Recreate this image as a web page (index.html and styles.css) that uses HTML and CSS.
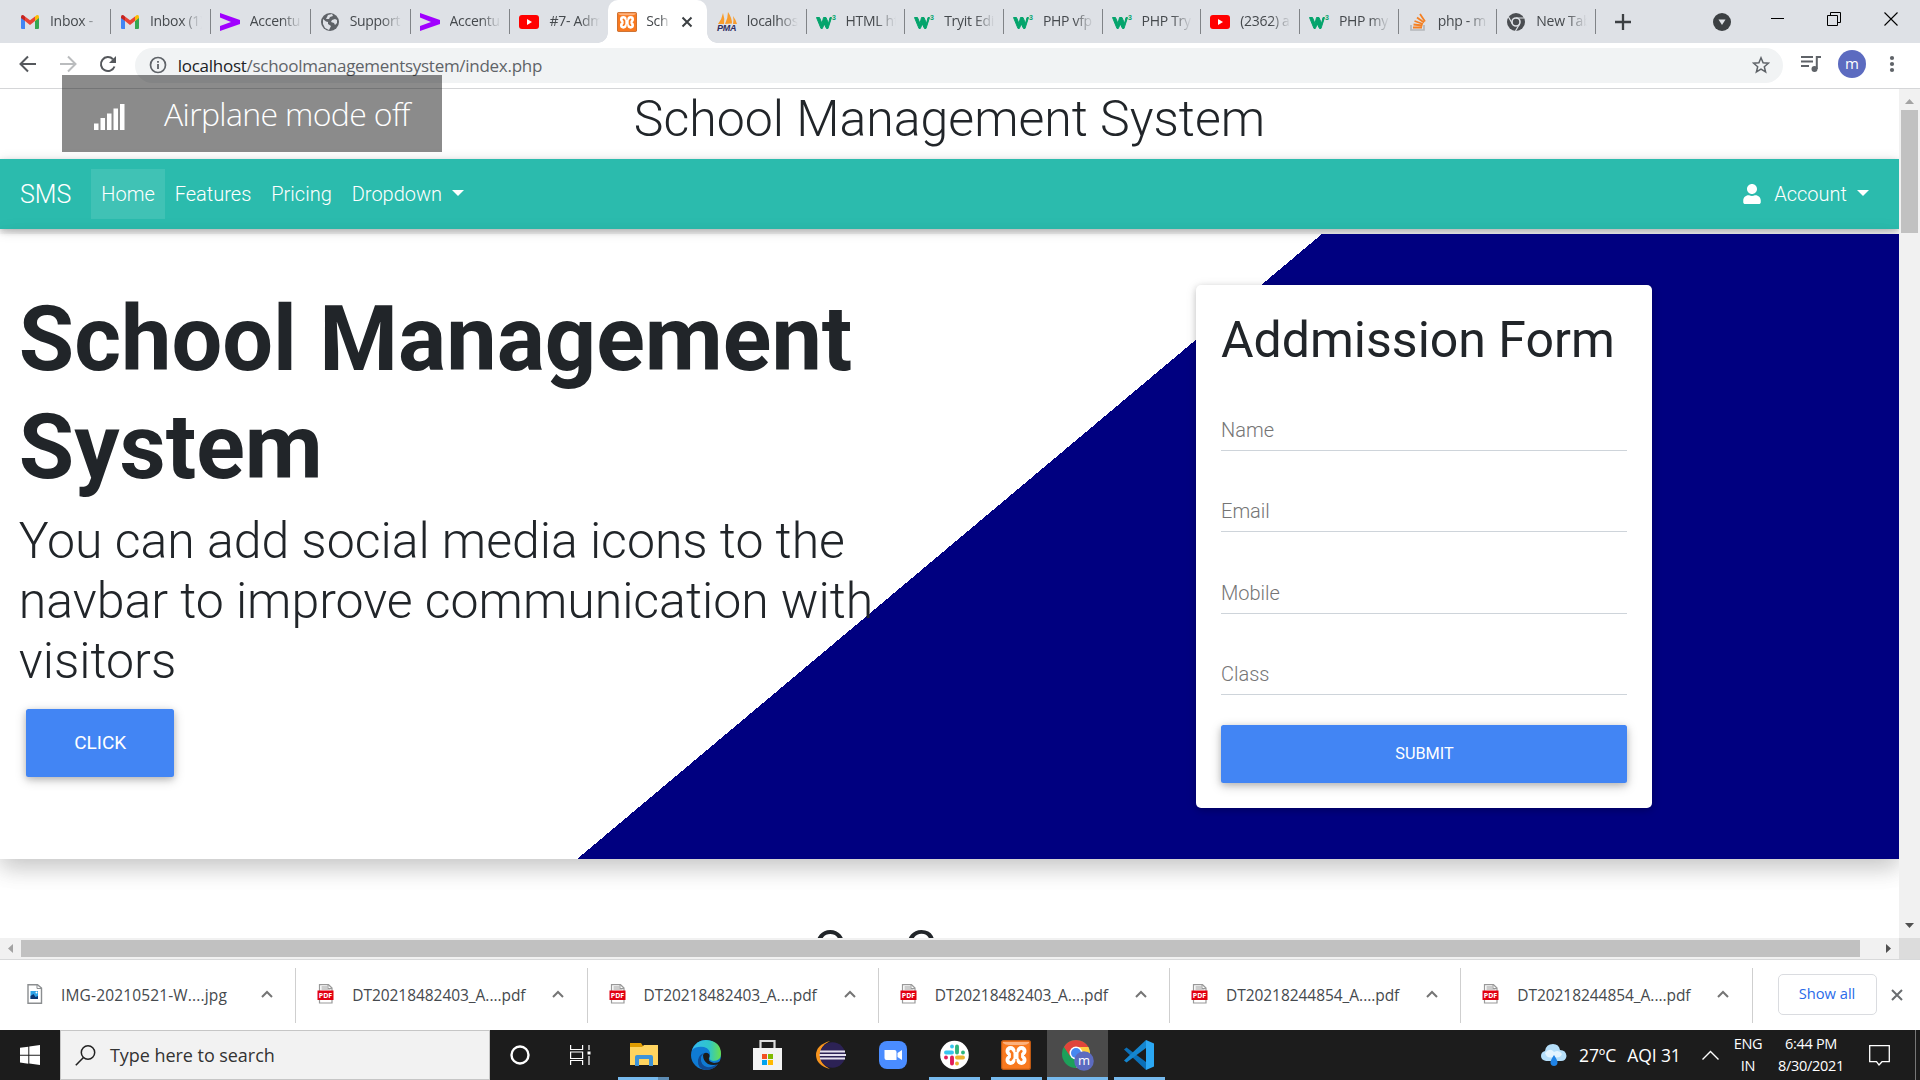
FILE: index.html
```html
<!DOCTYPE html>
<html lang="en">
<head>
<meta charset="utf-8">
<title>School Management System</title>
<link rel="stylesheet" href="styles.css">
</head>
<body>
<svg class="defs" aria-hidden="true">
  <symbol id="gmail" viewBox="0 0 20 20"><path d="M1 5v11q0 1 1 1h3V9z" fill="#4285f4"/><path d="M19 5v11q0 1-1 1h-3V9z" fill="#34a853"/><path d="M15 9V4.500l1.500-1.200Q19 2.500 19 5v1z" fill="#fbbc04"/><path d="M5 9V4.500L3.500 3.300Q1 2.500 1 5v1z" fill="#c5221f"/><path d="M5 4.500l5 3.800 5-3.800V9l-5 4-5-4z" fill="#ea4335"/></symbol>
  <symbol id="accenture" viewBox="0 0 20 20"><path d="M0 1v4.500l11 4.500-11 4V19l20-7v-4z" fill="#a100ff"/></symbol>
  <symbol id="globe" viewBox="0 0 20 20"><circle cx="10" cy="10" r="9" fill="#5f6368"/><path d="M3 7l3 2.500 2 .5v2l3 2-2 4-4-2-2-4zM8 3l4-1 1 2-3 1-1 2H6zM12 8l3-1 2 1v3l-2 2-1-2-3-1z" fill="#dee1e6"/></symbol>
  <symbol id="youtube" viewBox="0 0 20 20"><rect y="3" width="20" height="14" rx="3" fill="#f00"/><path d="M8 7v6l5-3z" fill="#fff"/></symbol>
  <symbol id="xampp" viewBox="0 0 30 30"><rect x=".6" y=".6" width="28.800" height="28.800" rx="2" fill="#f9791f" stroke="#bd5914" stroke-width="1.200"/><path d="M2 2h26v1q-2 2-6 2H8q-4 0-6-2z" fill="#fdb17d"/><g fill="#fff"><circle cx="9.500" cy="11" r="5"/><circle cx="20.500" cy="11" r="5"/><circle cx="9.500" cy="20" r="5"/><circle cx="20.500" cy="20" r="5"/><path d="M7 12h16v7H7z"/></g><path d="M9.700 11.200l1.500 2v4.600l-1.500 2M20.300 11.200l-1.500 2v4.600l1.500 2" fill="none" stroke="#f9791f" stroke-width="2.600" stroke-linecap="round" stroke-linejoin="round"/></symbol>
  <symbol id="pma" viewBox="0 0 20 20" overflow="visible"><path d="M1 12Q5 7 6 1q2 6 1 11zM8 12q3-6 3-12 4 6 4 11.500zM16 12q1-4 0-8 3 4 4 8z" fill="#f89c2c"/><text x="0" y="19" class="pma-text">PMA</text></symbol>
  <symbol id="w3" viewBox="0 0 20 20" overflow="visible"><path d="M.5 5.500h3l2.500 6 1.500-6h2.500l2.500 6 1.500-6h1.500L12 16.500h-1.500L8.300 12l-2 4.500H5z" fill="#04a46c" stroke="#04a46c"/><text x="16" y="8" class="w3-text">3</text></symbol>
  <symbol id="stack" viewBox="0 0 20 20"><path d="M3 13v5h13v-5" fill="none" stroke="#b4b7bb" stroke-width="1.700"/><path d="M5 15.500h9M5.500 12.500l9 1M6.500 9l8.500 3M9 5.500l7 5M12 2l5 7.500" stroke="#f48024" stroke-width="1.800"/></symbol>
  <symbol id="chromegray" viewBox="0 0 20 20"><circle cx="10" cy="10" r="9" fill="#4a4d51"/><circle cx="10" cy="10" r="4" fill="#4a4d51" stroke="#dee1e6" stroke-width="1.600"/><path d="M10 6h8M6.500 12L2.500 5M13.500 12l-4 7" stroke="#dee1e6" stroke-width="1.200"/></symbol>
  <symbol id="pdf" viewBox="0 0 17 20"><path d="M2.500.7h9L15 4v15H2.500z" fill="#fff" stroke="#999" stroke-width="1.200"/><path d="M4.500 3h6M4.500 5h9M11 1v3.500h4" fill="none" stroke="#999"/><rect x=".5" y="6.500" width="16" height="9.500" fill="#e2000f"/><text x="8.500" y="14" text-anchor="middle" class="pdf-text">PDF</text></symbol>
  <symbol id="image" viewBox="0 0 17 20"><path d="M2 .7h9.500L15.500 4v15.200H2z" fill="#fff" stroke="#8b8e90" stroke-width="1.400"/><path d="M11 .7V4.500h4" fill="none" stroke="#8b8e90"/><path d="M4.500 7h7.500v8H4.500z" fill="#2da3e8"/><path d="M4.500 12l3-2 2 3 2.500-1v3H4.500z" fill="#0a3573"/><circle cx="10.500" cy="8.500" r="1" fill="#fff"/></symbol>
  <symbol id="up" viewBox="0 0 12 8"><path d="M1 7l5-5 5 5" fill="none" stroke="#757575" stroke-width="2"/></symbol>
</svg>

<header class="tabstrip">
  <div class="tabs">
    <div class="tab"><svg><use href="#gmail"/></svg><span>Inbox -</span></div>
    <div class="tab"><svg><use href="#gmail"/></svg><span>Inbox (1)</span></div>
    <div class="tab"><svg><use href="#accenture"/></svg><span>Accentu</span></div>
    <div class="tab"><svg><use href="#globe"/></svg><span>Support</span></div>
    <div class="tab"><svg><use href="#accenture"/></svg><span>Accentu</span></div>
    <div class="tab before"><svg><use href="#youtube"/></svg><span>#7- Adm</span></div>
    <div class="tab active"><svg><use href="#xampp"/></svg><span>Sch</span><svg class="tab-close" viewBox="0 0 12 12"><path d="M1.500 1.500l9 9M10.500 1.500l-9 9" stroke="#3c4043" stroke-width="2"/></svg></div>
    <div class="tab"><svg><use href="#pma"/></svg><span>localhos</span></div>
    <div class="tab"><svg><use href="#w3"/></svg><span>HTML ht</span></div>
    <div class="tab"><svg><use href="#w3"/></svg><span>Tryit Edi</span></div>
    <div class="tab"><svg><use href="#w3"/></svg><span>PHP vfp</span></div>
    <div class="tab"><svg><use href="#w3"/></svg><span>PHP Try</span></div>
    <div class="tab"><svg><use href="#youtube"/></svg><span>(2362) a</span></div>
    <div class="tab"><svg><use href="#w3"/></svg><span>PHP my</span></div>
    <div class="tab"><svg><use href="#stack"/></svg><span>php - m</span></div>
    <div class="tab"><svg><use href="#chromegray"/></svg><span>New Tab</span></div>
  </div>
  <svg class="newtab" viewBox="0 0 16 16"><path d="M8 0v16M0 8h16" stroke="#3c4043" stroke-width="2.300"/></svg>
  <div class="winctl">
    <svg width="18" height="18" viewBox="0 0 18 18"><circle cx="9" cy="9" r="9" fill="#3c4043"/><path d="M5.500 6.500h7L9 12z" fill="#dee1e6"/></svg>
    <svg class="min" width="13" height="13" viewBox="0 0 13 13"><path d="M0 6.500h13" stroke="#000"/></svg>
    <svg width="14" height="14" viewBox="0 0 14 14"><path d="M.5 3.500h10v10H.5zM3.500 3V.5h10v10H11" fill="none" stroke="#000"/></svg>
    <svg width="14" height="14" viewBox="0 0 14 14"><path d="M.5.5l13 13M13.500.5l-13 13" stroke="#000" stroke-width="1.100"/></svg>
  </div>
</header>

<div class="toolbar">
  <div class="navbtns">
    <svg width="18" height="18" viewBox="0 0 18 18"><path d="M17 9H2M9 1.500L1.500 9 9 16.500" fill="none" stroke="#55585c" stroke-width="2"/></svg>
    <svg width="18" height="18" viewBox="0 0 18 18"><path d="M1 9h15M9 1.500L16.500 9 9 16.500" fill="none" stroke="#babcbe" stroke-width="2"/></svg>
    <svg width="18" height="18" viewBox="0 0 18 18"><path d="M15.500 11.500A7 7 0 1 1 14 4.200" fill="none" stroke="#55585c" stroke-width="2"/><path d="M17 1v7h-7z" fill="#55585c"/></svg>
  </div>
  <div class="omnibox">
    <svg width="18" height="18" viewBox="0 0 18 18"><circle cx="9" cy="9" r="7.500" fill="none" stroke="#5f6368" stroke-width="1.700"/><path d="M9 8v5M9 5v1.700" stroke="#5f6368" stroke-width="1.800"/></svg>
    <div class="url"><b>localhost</b>/schoolmanagementsystem/index.php</div>
    <svg class="star" width="18" height="18" viewBox="0 0 18 18"><path d="M9 1.800l2.100 5 5.300.4-4.100 3.500 1.300 5.300L9 13.200 4.400 16l1.300-5.300L1.600 7.200l5.300-.4z" fill="none" stroke="#5f6368" stroke-width="1.500"/></svg>
  </div>
  <svg width="20" height="18" viewBox="0 0 20 18"><path d="M0 2h12M0 6.500h12M0 11h8" stroke="#5f6368" stroke-width="2"/><path d="M15.800 14V2H20" fill="none" stroke="#5f6368" stroke-width="2"/><circle cx="13.500" cy="14" r="3" fill="#5f6368"/></svg>
  <div class="avatar">m</div>
  <svg width="6" height="18" viewBox="0 0 6 18"><g fill="#5f6368"><circle cx="3" cy="3" r="2.100"/><circle cx="3" cy="9" r="2.100"/><circle cx="3" cy="15" r="2.100"/></g></svg>
</div>

<div class="airplane">
  <svg width="31" height="26" viewBox="0 0 31 26"><path d="M0 19.500h4.500V26H0zM6.500 14H11v12H6.500zM13 9.500h4.500V26H13zM19.500 4.500H24V26h-4.500zM26 0h4.500v26H26z" fill="#fff"/></svg>
  <span>Airplane mode off</span>
</div>

<div class="viewport">
  <main class="page">
    <h1 class="title">School Management System</h1>
    <nav class="navbar">
      <a class="brand">SMS</a>
      <a class="link current">Home</a>
      <a class="link">Features</a>
      <a class="link">Pricing</a>
      <a class="link caret">Dropdown</a>
      <a class="link caret account"><svg width="18" height="20" viewBox="0 0 448 512"><path fill="#fff" d="M224 256c70.700 0 128-57.300 128-128S294.700 0 224 0 96 57.300 96 128s57.300 128 128 128zm89.600 32h-16.700c-22.200 10.200-46.900 16-72.900 16s-50.600-5.800-72.900-16h-16.700C60.200 288 0 348.200 0 422.400V464c0 26.500 21.500 48 48 48h352c26.500 0 48-21.500 48-48v-41.600c0-74.200-60.200-134.400-134.400-134.400z"/></svg>Account</a>
    </nav>
    <section class="hero">
      <div class="intro">
        <h2>School Management System</h2>
        <p>You can add social media icons to the navbar to improve communication with visitors</p>
        <a class="btn click">CLICK</a>
      </div>
      <form class="card">
        <h3>Addmission Form</h3>
        <label>Name</label>
        <label>Email</label>
        <label>Mobile</label>
        <label>Class</label>
        <a class="btn submit">SUBMIT</a>
      </form>
    </section>
    <h3 class="courses">Our Courses</h3>
  </main>
  <div class="vscroll">
    <svg width="9" height="5" viewBox="0 0 9 5"><path d="M0 5l4.500-5L9 5z" fill="#a3a3a3"/></svg>
    <div class="vthumb"></div>
    <svg class="down" width="9" height="5" viewBox="0 0 9 5"><path d="M0 0h9L4.500 5z" fill="#505050"/></svg>
  </div>
</div>
<div class="hscroll">
  <svg width="5" height="9" viewBox="0 0 5 9"><path d="M5 0v9L0 4.500z" fill="#a3a3a3"/></svg>
  <div class="hthumb"></div>
  <svg width="5" height="9" viewBox="0 0 5 9"><path d="M0 0v9l5-4.500z" fill="#505050"/></svg>
  <div class="corner"></div>
</div>

<div class="downloads">
  <div class="dl"><svg class="file"><use href="#image"/></svg><span class="jpg">IMG-20210521-W....jpg</span><svg class="up"><use href="#up"/></svg></div>
  <div class="dl"><svg class="file"><use href="#pdf"/></svg><span>DT20218482403_A....pdf</span><svg class="up"><use href="#up"/></svg></div>
  <div class="dl"><svg class="file"><use href="#pdf"/></svg><span>DT20218482403_A....pdf</span><svg class="up"><use href="#up"/></svg></div>
  <div class="dl"><svg class="file"><use href="#pdf"/></svg><span>DT20218482403_A....pdf</span><svg class="up"><use href="#up"/></svg></div>
  <div class="dl"><svg class="file"><use href="#pdf"/></svg><span>DT20218244854_A....pdf</span><svg class="up"><use href="#up"/></svg></div>
  <div class="dl"><svg class="file"><use href="#pdf"/></svg><span>DT20218244854_A....pdf</span><svg class="up"><use href="#up"/></svg></div>
  <div class="showall">Show all</div>
  <svg width="12" height="12" viewBox="0 0 12 12"><path d="M1 1l10 10M11 1L1 11" stroke="#6a6d70" stroke-width="2"/></svg>
</div>

<footer class="taskbar">
  <div class="start"><svg width="20" height="20" viewBox="0 0 20 20"><path d="M0 2.800L8.300 1.700v8H0zM9.300 1.500L20 0v9.700H9.300zM0 10.700h8.300v8L0 17.500zM9.300 10.700H20V20L9.300 18.600z" fill="#fff"/></svg></div>
  <div class="search"><svg width="21" height="21" viewBox="0 0 21 21"><circle cx="13" cy="7.500" r="6.700" fill="none" stroke="#222" stroke-width="1.500"/><path d="M8.500 12.500L.8 20.200" stroke="#222" stroke-width="1.600"/></svg><span>Type here to search</span></div>
  <div class="apps">
    <div class="app"><svg width="20" height="20" viewBox="0 0 20 20"><circle cx="10" cy="10" r="8.500" fill="none" stroke="#fff" stroke-width="2.400"/></svg></div>
    <div class="app"><svg width="21" height="20" viewBox="0 0 21 20"><path d="M.6 0v4.500h12V0M.6 20v-4.500h12V20M.6 7h12v6.500H.6zM19 0v5M19 11v9" fill="none" stroke="#fff" stroke-width="1.200"/><path d="M17.500 6.500h3v3h-3z" fill="#fff"/></svg></div>
    <div class="app run two"><svg width="28" height="30" viewBox="0 0 28 30"><path d="M0 3h11l2 3v4H0z" fill="#e09c00"/><path d="M0 7h12l2-2h14v20H0z" fill="#ffd45f"/><path d="M5 26V17q0-2 2-2h14q2 0 2 2v9h-4v-7H9v7H5z" fill="#3d93d8"/></svg></div>
    <div class="app"><svg width="30" height="30" viewBox="0 0 30 30"><defs><linearGradient id="eg" x1="0" x2="1"><stop offset="0" stop-color="#35b9f1"/><stop offset=".6" stop-color="#2fc6c8"/><stop offset="1" stop-color="#6ae04b"/></linearGradient></defs><circle cx="15" cy="15" r="15" fill="#0f7bd4"/><path d="M1 10Q5 0 15 0q15 1 15 14 0 7-8 7-5-1-3-5 1-7-6-9Q5 6 1 10z" fill="url(#eg)"/><path d="M10 17q-1 8 6 10 7 1 12-5-4 8-13 8-9-1-8-10 1-6 7-7-3 1-4 4z" fill="#114a92"/><path d="M12 15q2-4 6-1 1 2 0 4-1 4 5 5 4 0 8-3l-3 4q-6 2-11 0-5-3-5-9z" fill="#1c1c1c"/></svg></div>
    <div class="app"><svg width="29" height="30" viewBox="0 0 29 30"><path d="M7.500 10V1h14v9" fill="none" stroke="#ddd" stroke-width="2.200"/><path d="M0 8h29v22H0z" fill="#f3f3f3"/><path d="M9 14h5v5H9z" fill="#f25022"/><path d="M15 14h5v5h-5z" fill="#7fba00"/><path d="M9 20h5v5H9z" fill="#00a4ef"/><path d="M15 20h5v5h-5z" fill="#ffb900"/></svg></div>
    <div class="app"><svg width="30" height="30" viewBox="0 0 30 30"><path d="M14 1Q0 5 0 15t14 14Q4 24 4 15T14 1z" fill="#f7941e"/><circle cx="16.500" cy="15" r="12.800" fill="#2c2255"/><path d="M4 11.500h25M3.500 15H30M4 18.500h25" stroke="#e6e2ef" stroke-width="1.900"/></svg></div>
    <div class="app"><svg width="28" height="30" viewBox="0 0 28 30"><rect y="1" width="28" height="28" rx="8" fill="#4a8cff"/><path d="M5.500 10h10q2 0 2 2v8h-10q-2 0-2-2zM18.500 13l4.500-3v10l-4.500-3z" fill="#fff"/></svg></div>
    <div class="app run"><svg width="29" height="30" viewBox="0 0 29 30"><circle cx="14.500" cy="15" r="14.300" fill="#fff"/><g stroke-width="3.900" stroke-linecap="round"><path d="M6 12.500h6M12 6.500v.01" stroke="#36c5f0"/><path d="M17 6.500v6M23 12.500v.01" stroke="#2eb67d"/><path d="M17 17.500h6M17 23.500v.01" stroke="#ecb22e"/><path d="M12 17.500v6M6 17.500v.01" stroke="#e01e5a"/></g></svg></div>
    <div class="app run"><svg width="30" height="30"><use href="#xampp"/></svg></div>
    <div class="app run open"><svg width="32" height="32" viewBox="0 0 32 32"><circle cx="14" cy="15" r="14" fill="#1da05a"/><path d="M2 8Q6 1 14 1q8 0 12.500 7H14l-6 9z" fill="#e0443a"/><path d="M14 8h12.500Q30 16 26 22l-12 7 6-11z" fill="#ffcd40"/><circle cx="14" cy="14" r="6.500" fill="#fff"/><circle cx="14" cy="14" r="5" fill="#4688f1"/><circle cx="22" cy="22" r="9.800" fill="#5c6bc0"/><text x="22" y="26" text-anchor="middle" class="m-text">m</text></svg></div>
    <div class="app run"><svg width="30" height="30" viewBox="0 0 30 30"><path d="M0 9.500l2.500-2L22 22v8z" fill="#0b70b8"/><path d="M0 20.500l2.500 2L22 8V0z" fill="#1486d0"/><path d="M22 0l8 3.500v23L22 30z" fill="#2ba8f4"/></svg></div>
  </div>
  <div class="tray">
    <svg width="26" height="24" viewBox="0 0 26 24"><path d="M5 18q-5-1-5-5 0-4 4-5 1-7 8-7 6 0 7 6 6 0 6.500 6-.5 5-5.500 5z" fill="#b5def9"/><path d="M4 10q5-6 9-1 5-3 8 2-2 5-9 3-6 2-8-4z" fill="#e3f4ff"/><path d="M13 12q4 6 3.500 8Q16 23 13 23t-3.500-3Q9 18 13 12z" fill="#1f83e6"/></svg>
    <span class="weather"><span>27ºC</span><span>AQI 31</span></span>
    <svg class="traychev" width="17" height="10" viewBox="0 0 17 10"><path d="M.5 9.500l8-8 8 8" fill="none" stroke="#fff" stroke-width="1.400"/></svg>
    <div class="two-lines lang"><span>ENG</span><span>IN</span></div>
    <div class="two-lines clock"><span>6:44 PM</span><span>8/30/2021</span></div>
    <svg width="21" height="21" viewBox="0 0 21 21"><path d="M.7.700h19.600v16h-7.300L10 20l-2.500-3.300H.7z" fill="none" stroke="#fff" stroke-width="1.300"/></svg>
    <div class="peek"></div>
  </div>
</footer>
</body>
</html>
```
FILE: styles.css
```css
* { box-sizing: border-box; }
body { margin: 0; width: 1920px; height: 1080px; overflow: hidden; display: flex; flex-direction: column; font-family: "Open Sans", "Noto Sans", sans-serif; background: #fff; }
svg { display: block; flex: none; }
.defs { position: absolute; width: 0; height: 0; }
.pma-text { font: italic bold 9px "Liberation Sans", sans-serif; fill: #2f2d5f; }
.w3-text { font: bold 7px "Liberation Sans", sans-serif; fill: #04a46c; }
.pdf-text { font: bold 7px "Open Sans", sans-serif; fill: #fff; }
.m-text { font: 13px "Open Sans", sans-serif; fill: #fff; }

.tabstrip { height: 43px; background: #dee1e6; display: flex; align-items: center; padding-left: 11px; flex: none; }
.tabs { display: grid; grid-template-columns: repeat(5, 99.9px) repeat(11, 98.7px); height: 43px; }
.tab { display: flex; align-items: center; padding: 0 9px; font-size: 14px; color: #45494d; position: relative; min-width: 0; letter-spacing: -.3px; }
.tab svg { width: 20px; height: 20px; margin-right: 10px; overflow: visible; }
.tab span { flex: 1; overflow: hidden; white-space: nowrap; margin-top: -2px; -webkit-mask-image: linear-gradient(90deg, #000 60%, transparent); mask-image: linear-gradient(90deg, #000 60%, transparent); }
.tab::after { content: ""; position: absolute; right: 0; top: 9px; width: 1px; height: 25px; background: #808387; }
.tab.before::after { display: none; }
.tab.active { background: #fff; border-radius: 10px 10px 0 0; padding-right: 14px; left: -1px; }
.tab.active::before, .tab.active::after { content: ""; position: absolute; top: auto; bottom: 0; width: 10px; height: 10px; }
.tab.active::before { left: -10px; background: radial-gradient(circle at 0 0, transparent 9.500px, #fff 10px); }
.tab.active::after { right: -10px; background: radial-gradient(circle at 100% 0, transparent 9.500px, #fff 10px); }
.tab.active svg:first-child { margin-right: 9px; }
.tab.active .tab-close { width: 12px; height: 12px; margin: 0 0 0 11px; }
.newtab { width: 16px; height: 16px; margin-left: 19px; }
.winctl { margin-left: auto; display: flex; gap: 43px; padding-right: 22px; align-items: center; height: 37px; align-self: flex-start; }
.winctl svg:first-child { margin: 6px -3px 0 0; }

.toolbar { height: 46px; flex: none; display: flex; align-items: center; border-bottom: 1px solid #d5d6d8; padding: 0 25px 3px 19px; }
.navbtns { display: flex; gap: 22px; width: 116px; }
.omnibox { width: 1651px; height: 35px; border-radius: 18px; background: #f1f3f4; display: flex; align-items: center; padding: 0 13px 0 14px; margin: 2px 18px 0 0; }
.url { flex: 1; margin-left: 11px; font-size: 17px; color: #5f6368; letter-spacing: -.28px; }
.url b { font-weight: 400; color: #202124; }
.avatar { width: 28px; height: 28px; border-radius: 50%; background: #5c6bc0; color: #fff; font: 15px/26px "Open Sans", sans-serif; text-align: center; margin: 0 23px 0 17px; }

.airplane { position: absolute; left: 62px; top: 75px; width: 380px; height: 77px; background: rgba(0,0,0,.455); z-index: 5; display: flex; align-items: center; padding-left: 32px; color: #fff; font-size: 32px; font-weight: 300; white-space: nowrap; letter-spacing: -.65px; }
.airplane svg { margin: 7px 39px 0 0; }
.airplane span { margin-top: -1px; }

.viewport { height: 849px; flex: none; display: flex; overflow: hidden; }
.page { width: 1899px; overflow: hidden; font-family: Roboto, sans-serif; font-weight: 300; color: #212529; }
.title { margin: 0 0 10px; font-size: 50px; line-height: 60px; font-weight: 300; text-align: center; }
.navbar { height: 70px; background: #2bbbad; box-shadow: 0 2px 6px rgba(0,0,0,.16), 0 2px 13px rgba(0,0,0,.12), 0 4px 6px rgba(0,0,0,.06); display: flex; align-items: center; padding: 0 20px; color: #fff; font-size: 20px; margin-bottom: 5px; }
.brand { font-size: 25px; margin-right: 20px; }
.link { height: 50px; line-height: 50px; padding: 0 10px; display: flex; align-items: center; }
.current { background: rgba(255,255,255,.1); }
.caret::after { content: ""; border: 6px solid transparent; border-top-color: #fff; border-bottom: 0; margin-left: 10px; margin-top: -2px; }
.account { margin-left: auto; }
.account svg { margin-right: 13px; }
.hero { height: 625px; background: linear-gradient(140deg, transparent 50%, #000080 50%); box-shadow: 0 10px 21px rgba(0,0,0,.14), 0 7px 25px rgba(0,0,0,.1); display: grid; grid-template-columns: 1fr 1fr; align-items: start; }
.intro { padding: 52px 18.750px 0; }
.intro h2 { margin: 0 0 9px; font-size: 90px; line-height: 108px; font-weight: 700; }
.intro p { margin: 0 0 17.500px; font-size: 50px; line-height: 60px; letter-spacing: -.02px; }
.btn { display: flex; align-items: center; justify-content: center; background: #4285f4; color: #fff; border-radius: 2.500px; box-shadow: 0 2px 6px rgba(0,0,0,.16), 0 3px 12px rgba(0,0,0,.2); font-weight: 400; }
.click { width: 148px; height: 68px; margin-left: 7px; font-size: 19px; padding-left: 1px; }
.card { width: 456px; height: 523px; margin: 51px 0 0 246.500px; background: #fff; border-radius: 5px; padding: 25px; box-shadow: 0 2px 6px rgba(0,0,0,.16), 0 2px 12px rgba(0,0,0,.12); display: flex; flex-direction: column; }
.card h3 { margin: 0 0 34px; font-size: 50px; line-height: 60px; font-weight: 400; white-space: nowrap; }
.card label { display: block; height: 47px; line-height: 52px; border-bottom: 1px solid #ced4da; font-size: 20px; color: #757575; margin-bottom: 34.250px; }
.submit { height: 58px; margin-top: -4px; font-size: 16.250px; flex: none; padding: 0 0 2px 1px; }
.courses { margin: 60px 0 0; padding-left: 2px; font-size: 50px; line-height: 60px; font-weight: 400; text-align: center; }
.vscroll { width: 21px; background: #f1f1f1; display: flex; flex-direction: column; align-items: center; padding: 10px 0; }
.vthumb { width: 17px; height: 123px; background: #c1c1c1; margin-top: 6px; }
.vscroll .down { margin-top: auto; }

.hscroll { height: 22px; flex: none; background: #f1f1f1; border-bottom: 1px solid #d8d9da; display: flex; align-items: center; padding-left: 8px; }
.hthumb { width: 1839px; height: 17px; background: #c1c1c1; margin: 0 26px 0 8px; }
.corner { margin-left: auto; width: 21px; height: 21px; background: #dcdcdc; }

.downloads { height: 70px; flex: none; display: flex; align-items: center; padding: 0 17px 0 5px; }
.dl { width: 291.250px; height: 55px; border-right: 1.500px solid #cfcfcf; display: flex; align-items: center; padding-left: 21px; font-size: 15.500px; color: #45494d; }
.file { width: 17px; height: 20px; margin: -3px 18px 0 0; }
.dl span { width: 172px; white-space: nowrap; letter-spacing: -.05px; }
.dl .jpg { letter-spacing: .15px; }
.up { width: 12px; height: 8px; margin: -3px 0 0 28px; }
.showall { width: 99px; height: 41px; margin: -2px auto 0 25px; border: 1px solid #dadce0; border-radius: 5px; color: #2a6be9; font-size: 14.700px; line-height: 37px; text-align: center; }

.taskbar { height: 50px; flex: none; background: #1c1c1c; display: flex; color: #fff; }
.start { width: 60px; display: grid; place-items: center; }
.search { width: 430px; background: #f2f2f2; border: 1px solid #c6c6c6; display: flex; align-items: center; padding-left: 14px; color: #333; font-size: 18px; gap: 14px; letter-spacing: -.05px; }
.apps { display: grid; grid-template-columns: 60px 60px 67px 58.500px 64px 62px 62px 61.500px 62px 61px 62px; }
.app { display: flex; align-items: center; justify-content: center; }
.run { background: linear-gradient(#76b9ed, #76b9ed) center bottom / 51px 3px no-repeat; }
.run.two { background: linear-gradient(90deg, #76b9ed 79%, #5d8cb3 79%) center bottom / 51px 3px no-repeat; }
.run.open { background: linear-gradient(#76b9ed, #76b9ed) center bottom / 61px 3px no-repeat, #4b4b4b; }
.tray { margin-left: auto; display: flex; align-items: center; }
.weather { display: flex; gap: 11px; font-size: 17.500px; margin-left: 12px; width: 123px; letter-spacing: -.1px; white-space: nowrap; }
.two-lines { display: flex; flex-direction: column; align-items: center; font-size: 14.500px; line-height: 22px; letter-spacing: -.3px; }
.lang { width: 30px; margin-left: 14px; }
.clock { width: 70px; margin: 0 23px 0 13px; }
.peek { width: 5px; height: 50px; border-left: 1px solid #777; margin-left: 25px; }
```
